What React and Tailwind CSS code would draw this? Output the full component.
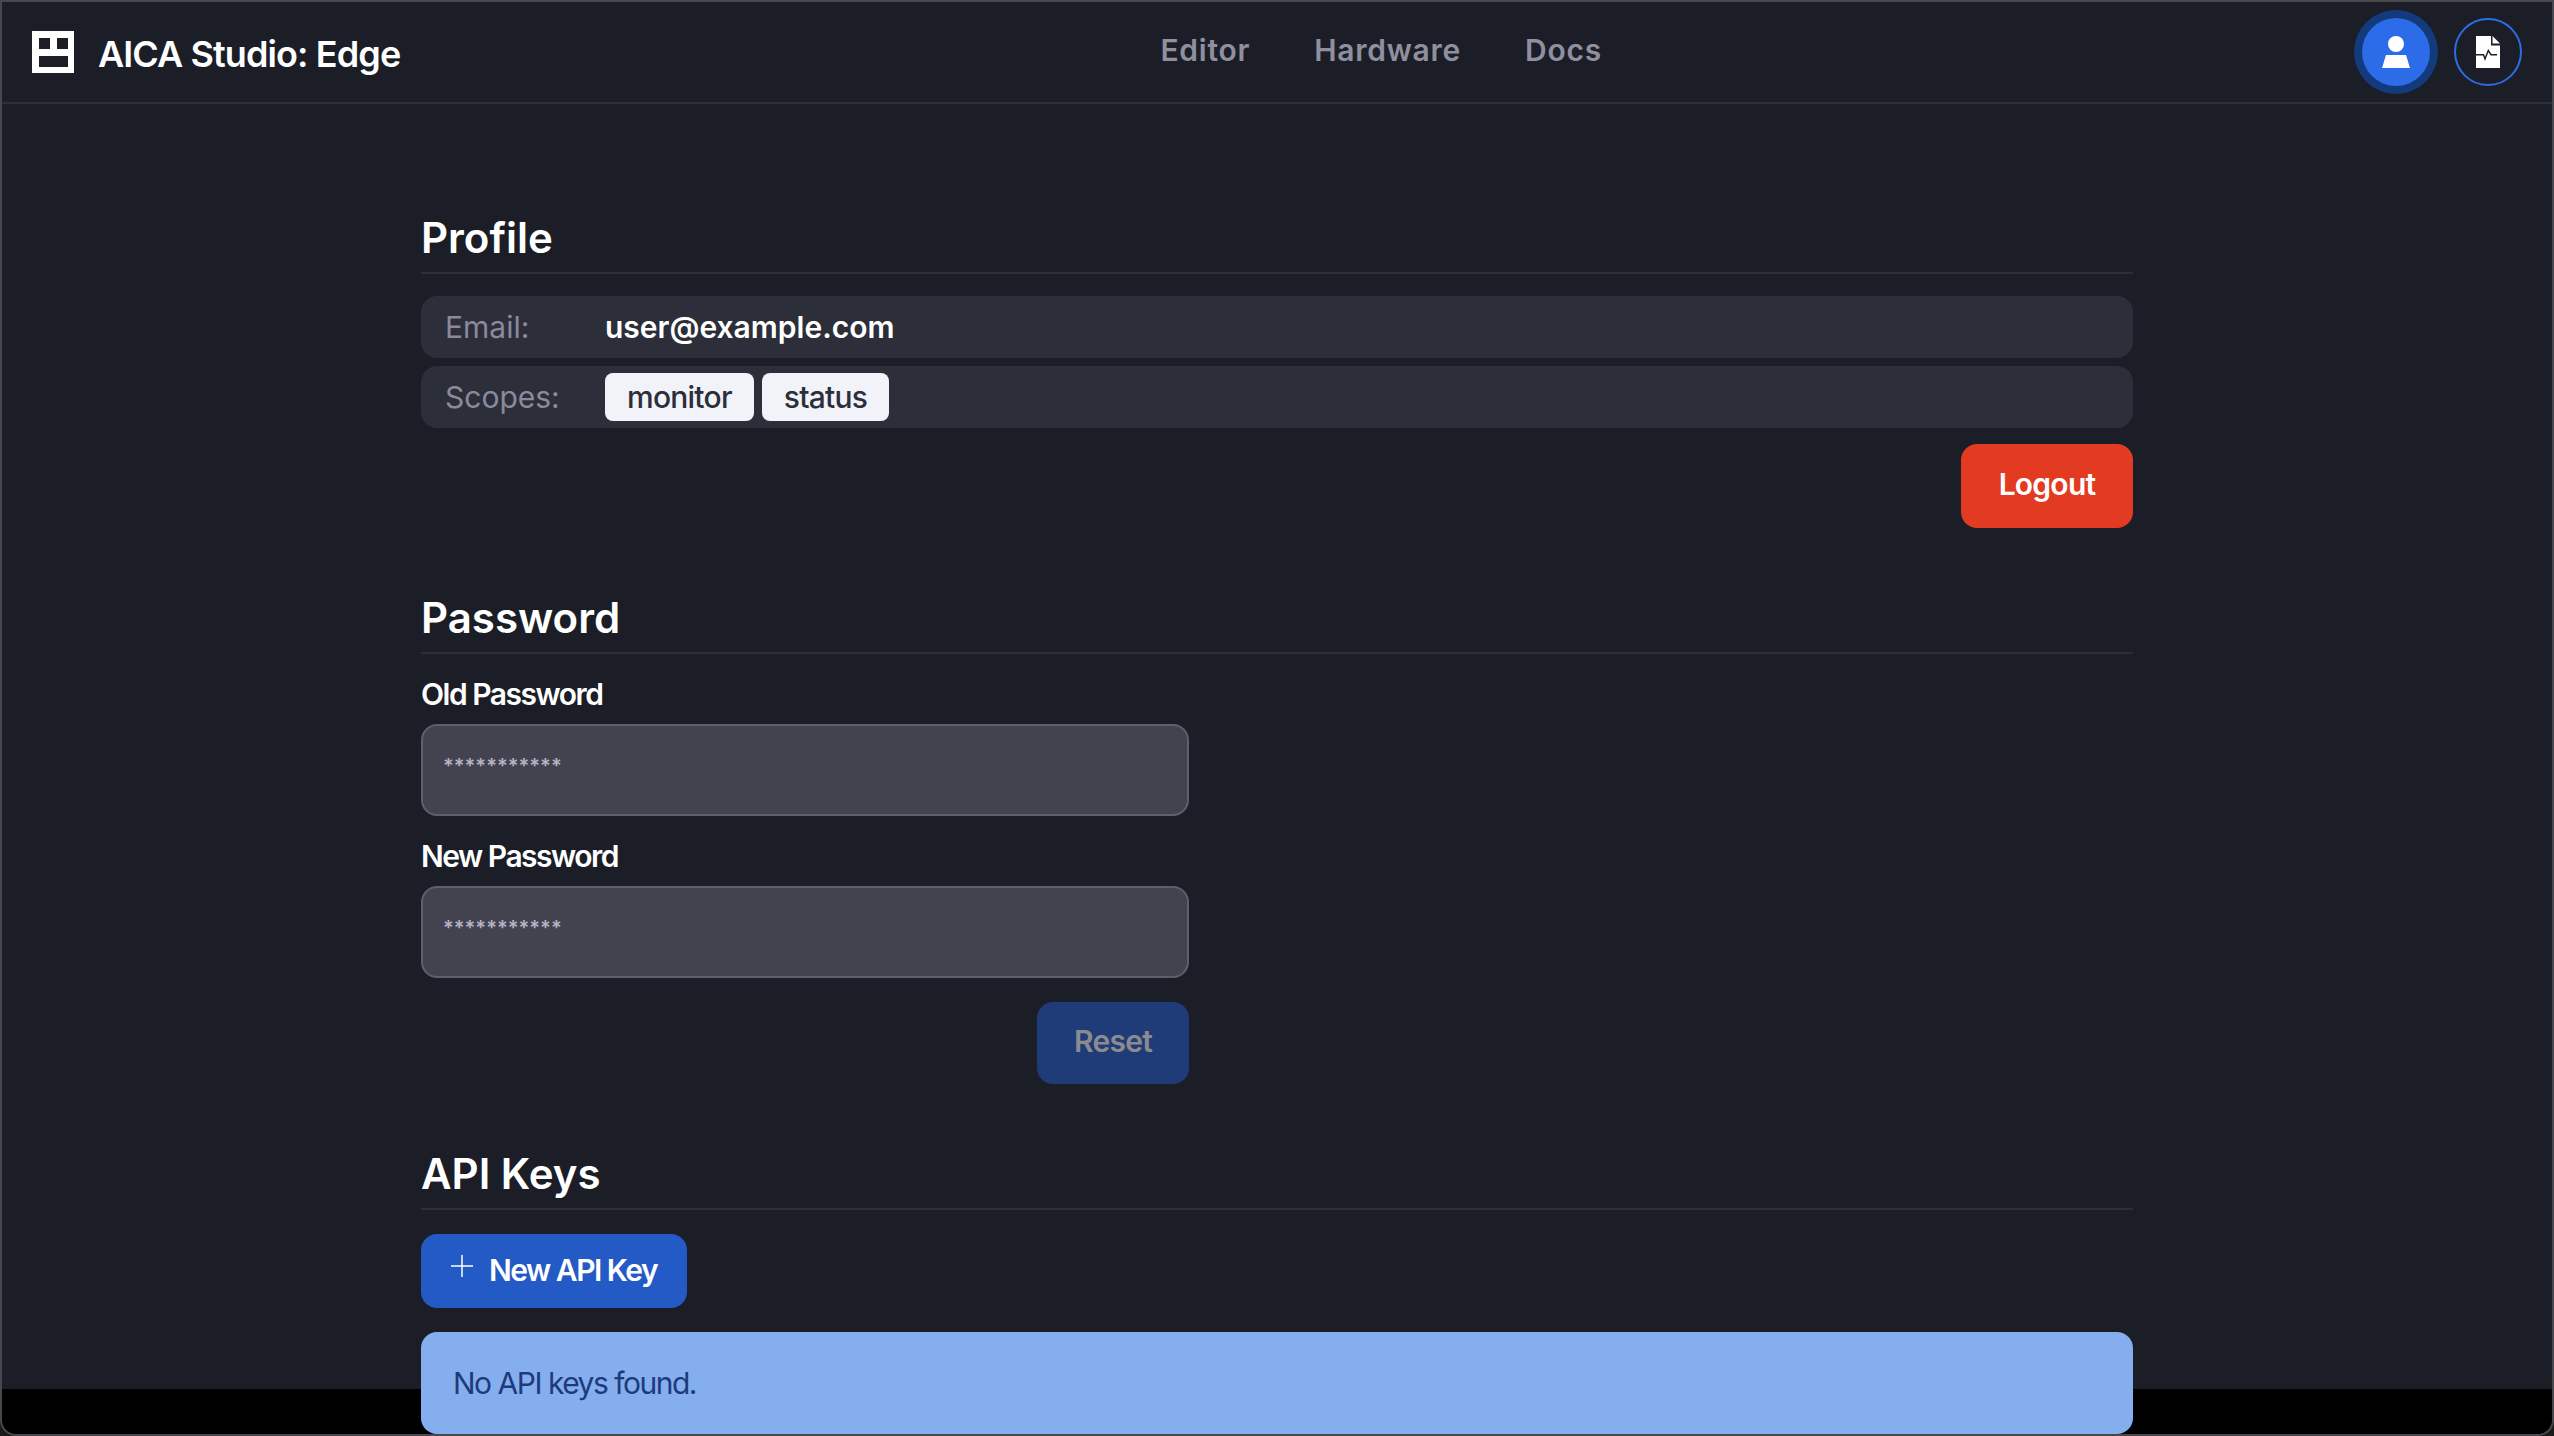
import React from 'react';

function Logo() {
  return (
    <svg viewBox="0 0 41 41" className="size-10.5 shrink-0" shapeRendering="crispEdges">
      <path fillRule="evenodd" fill="#ffffff" d="M0 0H41V41H0ZM7 7V18H18V7ZM24 7V18H35V7ZM7 24V35H35V24Z" />
    </svg>
  );
}

function SectionTitle({ children }) {
  return (
    <h2 className="border-b-2 border-[#2c2e39] pb-3 text-[42px] leading-11 font-semibold text-white">{children}</h2>
  );
}

function Field({ label }) {
  return (
    <div className="flex flex-col">
      <label className="mb-3.5 text-3xl leading-8 font-semibold tracking-tighter text-white">{label}</label>
      <input
        readOnly
        placeholder="***********"
        className="h-23 w-full rounded-2xl border-2 border-[#5e5e6e] bg-[#43434f] px-5 pb-2 text-xl font-semibold placeholder:text-[#b3b3c5]"
      />
    </div>
  );
}

function InfoRow({ label, children }) {
  return (
    <div className="flex h-15.5 items-center rounded-2xl bg-[#2c2e39] px-6">
      <span className="w-40 shrink-0 text-3xl text-[#8a8a9c]">{label}</span>
      {children}
    </div>
  );
}

function Tag({ children }) {
  return (
    <span className="rounded-lg bg-[#f2f3f9] px-5.5 py-1.5 text-3xl leading-9 font-medium tracking-tight text-[#2c2e39]">{children}</span>
  );
}

export default function App() {
  return (
    <div className="h-screen overflow-hidden bg-[#1a1a1a] font-['Inter',sans-serif]">
      <div className="flex h-full flex-col overflow-hidden rounded-b-2xl border-2 border-[#47474d] bg-black">
        <div className="h-[1387px] shrink-0 bg-[#1b1e26]">
          <header className="flex items-center justify-between border-b-2 border-[#2c2e39] px-7.5 py-4">
            <div className="flex items-center gap-6">
              <Logo />
              <span className="pt-1 text-4xl font-semibold tracking-tight text-white">AICA Studio: Edge</span>
            </div>
            <nav className="flex items-center gap-16 pb-1 text-3xl font-semibold tracking-wide text-[#8f8fa0]">
              <span>Editor</span>
              <span>Hardware</span>
              <span>Docs</span>
            </nav>
            <div className="flex items-center gap-6">
              <div className="size-17 rounded-full bg-[#2d6ce8] ring-8 ring-[#143a7e]">
                <svg viewBox="0 0 68 68" className="size-17">
                  <circle cx="34" cy="26" r="8" fill="#ffffff" />
                  <polygon points="24,37 44,37 48,50 20,50" fill="#ffffff" />
                </svg>
              </div>
              <div className="flex size-17 items-center justify-center rounded-full border-2 border-[#2d6ce8]">
                <svg viewBox="0 0 24 32" className="h-8 w-6">
                  <path fill="#ffffff" d="M0 0H15V9.5H24V32H0Z" />
                  <path fill="#ffffff" d="M16.5 0L24 7.5H16.5Z" />
                  <path fill="none" stroke="#1b1e26" strokeWidth="1.4" d="M0 18.7H7.5L9 23L12.3 14.5L15 18.7H21" />
                </svg>
              </div>
            </div>
          </header>

          <main className="mx-auto w-428 pt-28">
            <section className="flex flex-col">
              <SectionTitle>Profile</SectionTitle>
              <div className="mt-5.5 flex flex-col gap-2">
                <InfoRow label="Email:">
                  <span className="text-3xl font-semibold text-white">user@example.com</span>
                </InfoRow>
                <InfoRow label="Scopes:">
                  <div className="flex gap-2">
                    <Tag>monitor</Tag>
                    <Tag>status</Tag>
                  </div>
                </InfoRow>
              </div>
              <button className="mt-4 h-21 w-43 self-end rounded-2xl bg-[#e23b22] pb-1 text-3xl font-semibold tracking-tight text-white">Logout</button>
            </section>

            <section className="mt-17 flex flex-col">
              <SectionTitle>Password</SectionTitle>
              <div className="mt-6 flex w-192 flex-col gap-6">
                <Field label="Old Password" />
                <Field label="New Password" />
                <button className="h-20.5 w-38 self-end rounded-2xl bg-[#1f3c78] pb-1 text-3xl font-semibold tracking-tight text-[#8b8b8f]">Reset</button>
              </div>
            </section>

            <section className="mt-17 flex flex-col">
              <SectionTitle>API Keys</SectionTitle>
              <button className="mt-6 flex h-18.5 w-66.5 items-center gap-4 rounded-2xl bg-[#245ac5] pb-0.5 pl-7.5 text-3xl font-semibold tracking-tighter text-white">
                <svg viewBox="0 0 22 22" className="mb-2 size-5.5 shrink-0" fill="none" stroke="#ffffff" strokeWidth="1.5">
                  <path d="M11 0V22M0 11H22" />
                </svg>
                New API Key
              </button>
              <div className="mt-6 flex h-25.5 items-center rounded-2xl bg-[#85aeee] px-8 text-3xl tracking-tighter text-[#1d3b7c]">No API keys found.</div>
            </section>
          </main>
        </div>
      </div>
    </div>
  );
}
